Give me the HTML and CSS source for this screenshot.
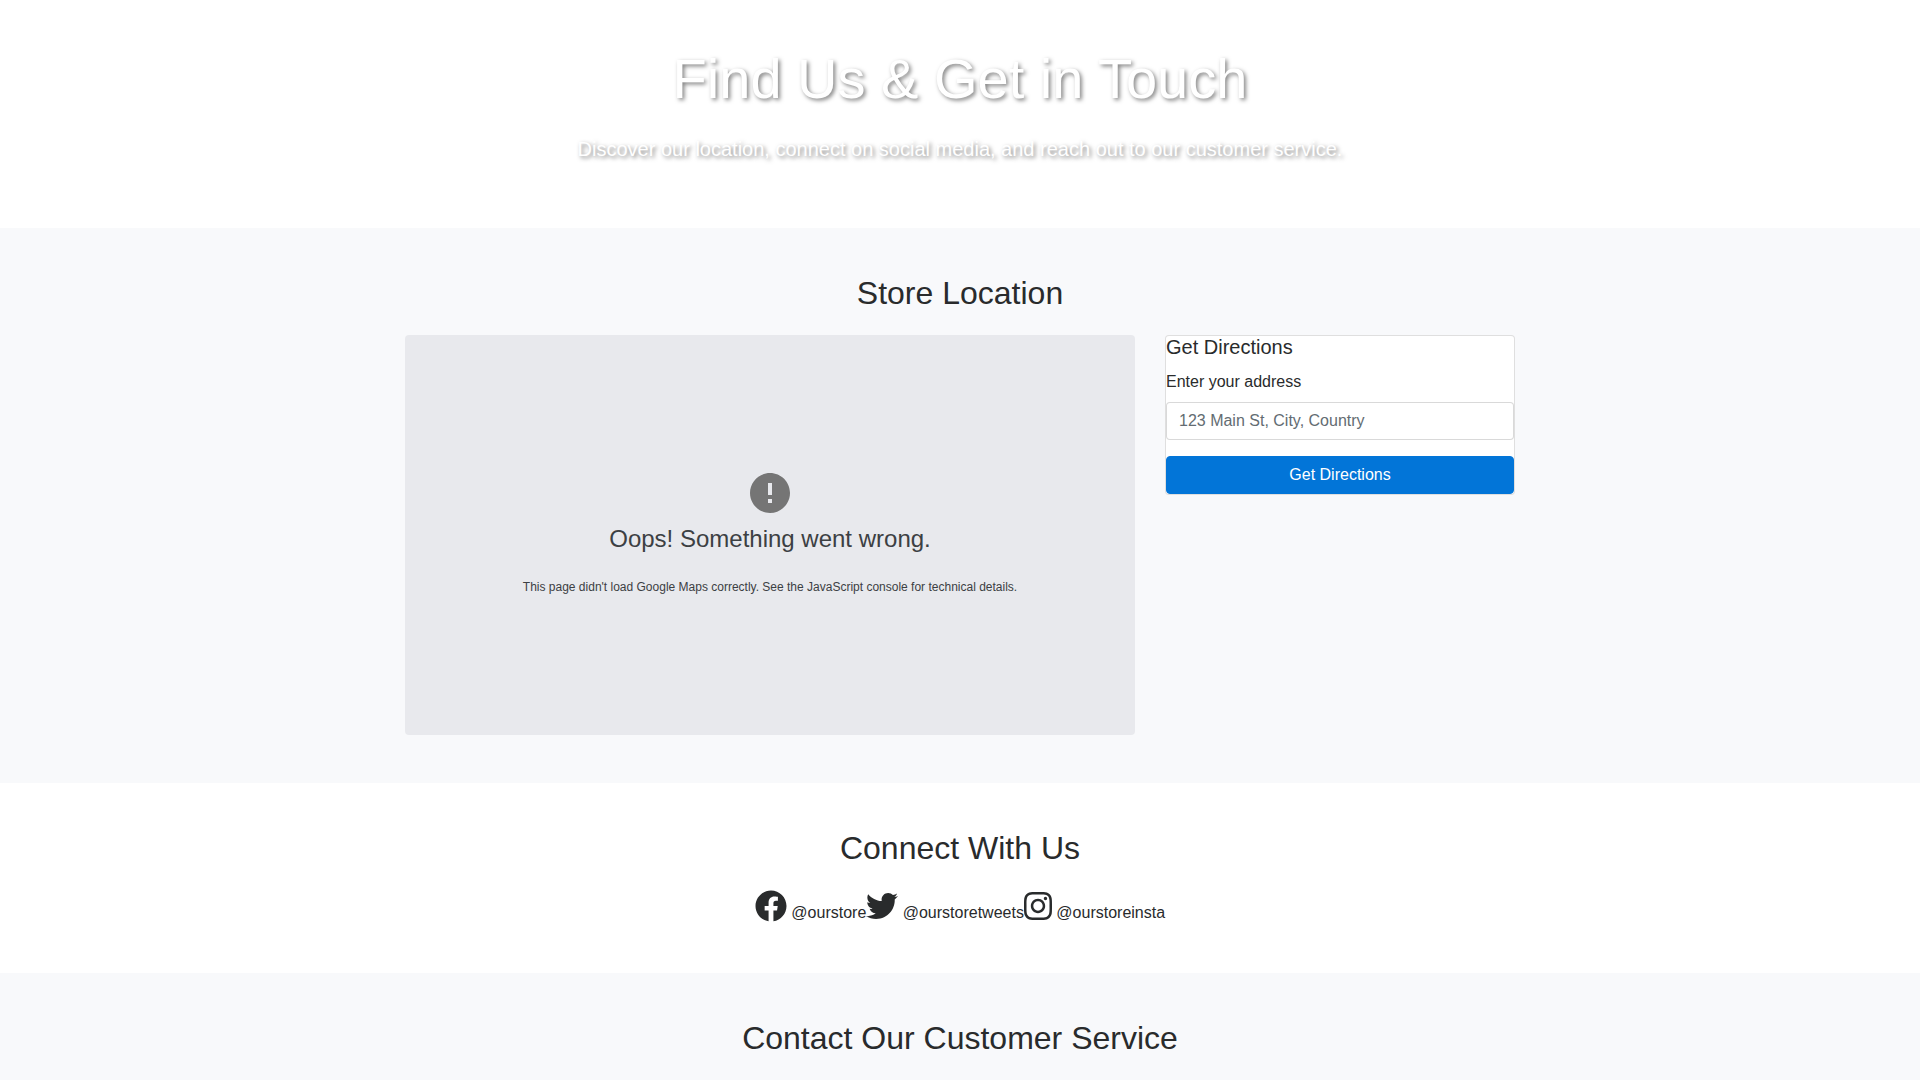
FILE: index.html
```html
<!DOCTYPE html>
<html lang="en">

<head>
    <meta charset="UTF-8">
    <meta name="viewport" content="width=device-width, initial-scale=1.0">
    <title>Find Us & Get in Touch</title>
    <link rel="stylesheet" href="styles.css">
</head>

<body>
    <header class="hero">
        <h1>Find Us &amp; Get in Touch</h1>
        <p class="lead">Discover our location, connect on social media, and reach out to our customer service.</p>
    </header>

    <section class="section section-light" id="location">
        <div class="container">
            <h2>Store Location</h2>
            <div class="row">
                <div class="map">
                    <svg class="map-icon" viewBox="2 2 20 20" aria-hidden="true">
                        <path d="M12 2C6.48 2 2 6.48 2 12s4.480 10 10 10 10-4.480 10-10S17.520 2 12 2zm1 15h-2v-2h2v2zm0-4h-2V7h2v6z"/>
                    </svg>
                    <div class="map-title">Oops! Something went wrong.</div>
                    <div class="map-message">This page didn't load Google Maps correctly. See the JavaScript console for technical details.</div>
                </div>
                <div class="card">
                    <h3>Get Directions</h3>
                    <form id="directionsForm">
                        <div class="form-group">
                            <label for="address">Enter your address</label>
                            <input type="text" id="address" name="address" placeholder="123 Main St, City, Country">
                        </div>
                        <button type="submit">Get Directions</button>
                    </form>
                </div>
            </div>
        </div>
    </section>

    <section class="section" id="social">
        <div class="container">
            <h2>Connect With Us</h2>
            <div class="social-links">
                <a href="#facebook">
                    <svg class="icon" viewBox="0 0 512 512" aria-hidden="true">
                        <path d="M504 256C504 119 393 8 256 8S8 119 8 256c0 123.780 90.690 226.380 209.250 245V327.690h-63V256h63v-54.640c0-62.150 37-96.480 93.670-96.480 27.140 0 55.520 4.840 55.520 4.840v61h-31.280c-30.800 0-40.410 19.120-40.410 38.730V256h68.780l-11 71.690h-57.780V501C413.310 482.380 504 379.780 504 256z"/>
                    </svg>
                    @ourstore
                </a>
                <a href="#twitter">
                    <svg class="icon" viewBox="0 0 512 512" aria-hidden="true">
                        <path d="M459.370 151.716c.325 4.548.325 9.097.325 13.645 0 138.720-105.583 298.558-298.558 298.558-59.452 0-114.680-17.219-161.137-47.106 8.447.974 16.568 1.299 25.340 1.299 49.055 0 94.213-16.568 130.274-44.832-46.132-.975-84.792-31.188-98.112-72.772 6.498.974 12.995 1.624 19.818 1.624 9.421 0 18.843-1.300 27.614-3.573-48.081-9.747-84.143-51.980-84.143-102.985v-1.299c13.969 7.797 30.214 12.670 47.431 13.319-28.264-18.843-46.781-51.005-46.781-87.391 0-19.492 5.197-37.360 14.294-52.954 51.655 63.675 129.300 105.258 216.365 109.807-1.624-7.797-2.599-15.918-2.599-24.040 0-57.828 46.782-104.934 104.934-104.934 30.213 0 57.502 12.670 76.670 33.137 23.715-4.548 46.456-13.320 66.599-25.340-7.798 24.366-24.366 44.833-46.132 57.827 21.117-2.273 41.584-8.122 60.426-16.243-14.292 20.791-32.161 39.308-52.628 54.253z"/>
                    </svg>
                    @ourstoretweets
                </a>
                <a href="#instagram">
                    <svg class="icon icon-narrow" viewBox="0 0 448 512" aria-hidden="true">
                        <path d="M224.100 141c-63.600 0-114.900 51.300-114.900 114.900s51.300 114.900 114.900 114.900S339 319.500 339 255.900 287.700 141 224.100 141zm0 189.600c-41.100 0-74.700-33.500-74.700-74.700s33.500-74.700 74.700-74.700 74.700 33.500 74.700 74.700-33.600 74.700-74.700 74.700zm146.400-194.300c0 14.900-12 26.800-26.800 26.800-14.900 0-26.800-12-26.800-26.800s12-26.800 26.800-26.800 26.800 12 26.800 26.800zm76.100 27.200c-1.700-35.900-9.900-67.700-36.200-93.900-26.200-26.200-58-34.400-93.900-36.200-37-2.100-147.900-2.100-184.900 0-35.800 1.700-67.600 9.900-93.900 36.100s-34.400 58-36.200 93.900c-2.100 37-2.100 147.900 0 184.900 1.700 35.900 9.900 67.700 36.200 93.900s58 34.400 93.900 36.200c37 2.100 147.900 2.100 184.900 0 35.900-1.700 67.700-9.900 93.900-36.200 26.200-26.200 34.400-58 36.200-93.900 2.100-37 2.100-147.800 0-184.800zM398.800 388c-7.800 19.600-22.900 34.700-42.600 42.600-29.500 11.700-99.500 9-132.100 9s-102.700 2.600-132.100-9c-19.600-7.800-34.700-22.900-42.600-42.600-11.700-29.500-9-99.500-9-132.100s-2.600-102.700 9-132.100c7.800-19.600 22.900-34.700 42.600-42.600 29.500-11.700 99.500-9 132.100-9s102.700-2.600 132.100 9c19.600 7.800 34.700 22.900 42.600 42.600 11.700 29.500 9 99.500 9 132.100s2.700 102.700-9 132.100z"/>
                    </svg>
                    @ourstoreinsta
                </a>
            </div>
        </div>
    </section>

    <section class="section section-light" id="contact">
        <div class="container">
            <h2>Contact Our Customer Service</h2>
        </div>
    </section>

    <script>
        document.getElementById('directionsForm').addEventListener('submit', function (e) {
            e.preventDefault();
        });
    </script>
</body>

</html>
```

FILE: styles.css
```css
* {
    box-sizing: border-box;
}

body {
    margin: 0;
    font-family: "Liberation Sans", Arial, sans-serif;
    font-size: 16px;
    line-height: 24px;
    color: #292b2c;
    background-color: #ffffff;
}

h1,
h2,
h3 {
    margin: 0;
    font-weight: normal;
}

.hero {
    padding: 48px 16px;
    text-align: center;
    color: #ffffff;
    text-shadow: 2px 2px 4px rgba(0, 0, 0, 0.5);
}

h1 {
    margin-bottom: 24px;
    font-size: 56px;
    line-height: 62px;
}

.lead {
    margin: 0 0 16px;
    font-size: 20px;
    line-height: 30px;
}

.section {
    padding: 48px 0;
}

.section-light {
    background-color: #f8f9fb;
}

.container {
    max-width: 1140px;
    margin: 0 auto;
    padding: 0 15px;
}

h2 {
    margin-bottom: 24px;
    font-size: 32px;
    line-height: 35px;
    text-align: center;
}

.row {
    display: grid;
    grid-template-columns: repeat(12, 1fr);
    gap: 30px;
    align-items: start;
}

/* map */
.map {
    grid-column: span 8;
    display: flex;
    flex-direction: column;
    align-items: center;
    justify-content: center;
    height: 400px;
    border-radius: 4px;
    background-color: #e8e9ed;
    color: #3c4043;
    text-align: center;
}

.map-icon {
    width: 40px;
    height: 40px;
    margin-bottom: 8px;
    fill: #757575;
}

.map-title {
    margin-bottom: 20px;
    font-size: 24px;
    line-height: 36px;
}

.map-message {
    font-size: 12px;
    line-height: 20px;
}

/* directions */
.card {
    grid-column: span 4;
    border: 1px solid rgba(0, 0, 0, 0.125);
    border-radius: 4px;
    background-color: #ffffff;
}

h3 {
    margin-bottom: 12px;
    font-size: 20px;
    line-height: 22px;
}

.form-group {
    margin-bottom: 16px;
}

label {
    display: block;
    margin-bottom: 8px;
}

input[type="text"] {
    display: block;
    width: 100%;
    padding: 8px 12px;
    border: 1px solid rgba(0, 0, 0, 0.15);
    border-radius: 4px;
    font-family: inherit;
    font-size: 16px;
    line-height: 20px;
    color: #464a4c;
}

input::placeholder {
    color: #636c72;
}

button {
    display: block;
    width: 100%;
    padding: 8px 16px;
    border: 1px solid #0275d8;
    border-radius: 4px;
    background-color: #0275d8;
    color: #ffffff;
    font-family: inherit;
    font-size: 16px;
    line-height: 20px;
    cursor: pointer;
}

button:hover {
    background-color: #025aa5;
}

/* social links */
.social-links {
    display: flex;
    flex-wrap: wrap;
    justify-content: center;
}

.social-links a {
    color: #292b2c;
    text-decoration: none;
}

.icon {
    width: 32px;
    height: 32px;
    vertical-align: -4px;
    fill: currentColor;
}

.icon-narrow {
    width: 28px;
}

@media (max-width: 768px) {
    .map,
    .card {
        grid-column: span 12;
    }
}
```
